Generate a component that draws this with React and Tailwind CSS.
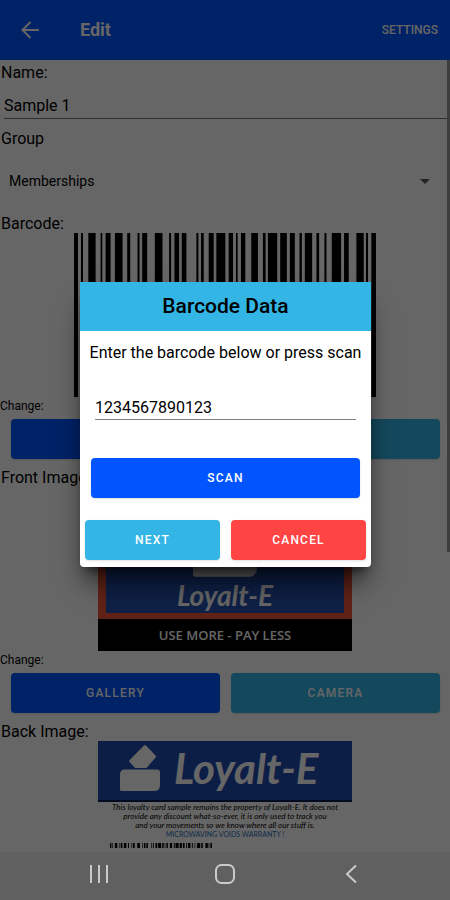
import React, { useState } from "react";

// [x, width] of every bar
const bars = [
  [0, 12], [21, 6], [43, 22], [80, 5], [95, 15], [123, 23], [160, 9], [191, 6],
  [205, 15], [243, 23], [286, 6], [302, 14], [324, 14], [368, 6], [382, 8],
  [405, 15], [428, 27], [465, 13], [487, 5], [502, 13], [533, 20], [568, 8],
  [583, 28], [620, 20], [649, 15], [678, 7], [694, 22], [729, 8], [753, 6],
  [775, 28], [812, 14], [849, 22], [878, 6], [894, 14],
];

const Barcode = ({ className }) => (
  <svg className={className} viewBox="0 0 908 100" preserveAspectRatio="none" aria-hidden="true">
    {bars.map(([x, w]) => (
      <rect key={x} x={x} y="0" width={w} height="100" fill="#000" />
    ))}
  </svg>
);

const BallotLogo = ({ className }) => (
  <svg className={className} viewBox="0 0 40 46" fill="#fff" aria-hidden="true">
    <path d="M24 0.5Q25 -0.4 26 0.5L35.5 10.5Q36.5 11.5 35.5 12.7L26.5 23H15L9.5 17Q8.7 16 9.7 15Z" />
    <path d="M5 24.5H37Q40 24.5 40 27.5V40Q40 46 34 46H1.5Q0 46 0 44.5V29.5Q0 24.5 5 24.5Z" />
  </svg>
);

const ActionButton = ({ className, children, ...props }) => (
  <button
    type="button"
    className={`h-10 flex-1 rounded-sm text-xs font-medium tracking-widest text-white shadow ${className}`}
    {...props}
  >
    {children}
  </button>
);

const FieldLabel = ({ className = "", ...props }) => (
  <label className={`block px-px leading-5 ${className}`} {...props} />
);

const ChangeRow = () => (
  <>
    <p className="mt-px text-xs leading-4">Change:</p>
    <div className="mt-1 flex gap-[11px] pl-[11px] pr-2.5 pt-px">
      <ActionButton className="bg-[#0055ff]">GALLERY</ActionButton>
      <ActionButton className="bg-[#33b5e5]">CAMERA</ActionButton>
    </div>
  </>
);

const FrontCard = () => (
  <div className="mx-auto w-[254px]">
    <div className="flex h-[132px] flex-col items-center justify-end border-x-8 border-y-[6px] border-[#f0553b] bg-[#2552b0]">
      <BallotLogo className="h-[74px] w-16 shrink-0" />
      <p className="font-['Lato'] text-[28px] font-bold italic leading-9 text-white">Loyalt-E</p>
    </div>
    <p className="bg-black text-center font-['Open_Sans'] text-[13px] font-semibold leading-8 text-white">
      USE MORE - PAY LESS
    </p>
  </div>
);

const BackCard = () => (
  <div className="mx-auto w-[254px]">
    <div className="flex h-[61px] items-center gap-[14px] border-b-2 border-[#0a1c50] bg-[#204db0] pb-1.5 pl-[22px]">
      <BallotLogo className="h-[46px] w-10" />
      <p className="font-['Lato'] text-[42px] font-bold italic leading-none text-white">Loyalt-E</p>
    </div>
    <p className="pt-px text-center font-['Lato'] text-[8px] italic leading-[9px]">
      This loyalty card sample remains the property of Loyalt-E. It does not
      <br />
      provide any discount what-so-ever, it is only used to track you
      <br />
      and your movements so we know where all our stuff is.
    </p>
    <p className="text-center font-['Lato'] text-[7px] leading-[9px] text-[#2a6fc0]">
      MICROWAVING VOIDS WARRANTY !
    </p>
    <Barcode className="ml-3 mt-1 h-[5px] w-[102px]" />
  </div>
);

const BarcodeDialog = () => {
  const [code, setCode] = useState("1234567890123");

  return (
    <div className="absolute inset-0 flex items-center justify-center bg-black/60 pb-[3px] pl-20 pr-[79px]">
      <div
        role="dialog"
        aria-labelledby="dialog-title"
        className="w-full rounded-sm bg-white pb-[7px] shadow-xl shadow-black/60"
      >
        <h2 id="dialog-title" className="bg-[#33b5e5] text-center text-[21px] font-medium leading-[49px]">
          Barcode Data
        </h2>
        <div className="flex flex-col px-2 pt-3">
          <label htmlFor="code" className="whitespace-nowrap text-center leading-5">
            Enter the barcode below or press scan
          </label>
          <input
            id="code"
            value={code}
            onChange={(e) => setCode(e.target.value)}
            className="mx-[7px] mt-[33px] h-6 border-b border-[#808080] outline-none"
          />
          <div className="mt-[38px] flex px-[3px]">
            <ActionButton className="bg-[#0055ff]">SCAN</ActionButton>
          </div>
        </div>
        <div className="mt-[22px] flex gap-[11px] px-[5px]">
          <ActionButton className="bg-[#33b5e5]">NEXT</ActionButton>
          <ActionButton className="bg-[#ff4444]">CANCEL</ActionButton>
        </div>
      </div>
    </div>
  );
};

const App = () => {
  const [name, setName] = useState("Sample 1");

  return (
    <div className="flex h-screen flex-col overflow-hidden font-['Roboto',sans-serif] text-base text-black">
      <div className="relative flex min-h-0 flex-1 flex-col bg-white">
        <header className="flex h-[60px] shrink-0 items-center bg-[#0055ff] px-3 text-white">
          <button type="button" aria-label="Back" className="p-2">
            <svg className="h-5 w-5" viewBox="0 0 20 20" fill="none" stroke="currentColor" strokeWidth="2">
              <path d="M19 10H3M10.5 2L2.5 10L10.5 18" />
            </svg>
          </button>
          <h1 className="ml-8 flex-1 text-lg font-bold">Edit</h1>
          <button type="button" className="text-xs font-medium">SETTINGS</button>
        </header>

        <main className="relative min-h-0 flex-1 overflow-hidden pt-[3px]">
          <FieldLabel htmlFor="name">Name:</FieldLabel>
          <div className="pl-1 pt-2.5">
            <input
              id="name"
              value={name}
              onChange={(e) => setName(e.target.value)}
              className="h-[26px] w-full border-b border-[#777] text-base outline-none"
            />
          </div>
          <FieldLabel htmlFor="group" className="mt-2.5">Group</FieldLabel>
          <div className="relative mt-4">
            <select id="group" className="h-8 w-full appearance-none px-[9px] text-sm outline-none">
              <option>Memberships</option>
            </select>
            <svg className="pointer-events-none absolute right-5 top-3.5 h-[5px] w-2.5" viewBox="0 0 10 5" fill="#555">
              <path d="M0 0H10L5 5Z" />
            </svg>
          </div>
          <p className="mt-[18px] px-px leading-[18px]">Barcode:</p>
          <Barcode className="mx-auto h-[164px] w-[302px]" />
          <ChangeRow />

          <p className="mt-2.5 px-px leading-[18px]">Front Image:</p>
          <FrontCard />
          <ChangeRow />

          <p className="mt-2.5 px-px leading-[18px]">Back Image:</p>
          <BackCard />
          <div className="absolute right-0 top-0 h-[492px] w-[3px] bg-[#999]" />
        </main>

        <BarcodeDialog />
      </div>

      <nav className="flex h-12 shrink-0 items-center justify-around bg-[#606060] px-9 pb-1 text-[#cacaca]">
        <button type="button" aria-label="Recent apps">
          <svg className="h-5 w-5" viewBox="0 0 20 20" stroke="currentColor" strokeWidth="2">
            <path d="M2 1V19M10 1V19M18 1V19" />
          </svg>
        </button>
        <button type="button" aria-label="Home">
          <svg className="h-5 w-5" viewBox="0 0 20 20" fill="none" stroke="currentColor" strokeWidth="2">
            <rect x="1" y="1" width="18" height="18" rx="5.5" />
          </svg>
        </button>
        <button type="button" aria-label="Back">
          <svg className="h-5 w-5" viewBox="0 0 20 20" fill="none" stroke="currentColor" strokeWidth="2">
            <path d="M15 1.5L6 10L15 18.5" />
          </svg>
        </button>
      </nav>
    </div>
  );
};

export default App;
